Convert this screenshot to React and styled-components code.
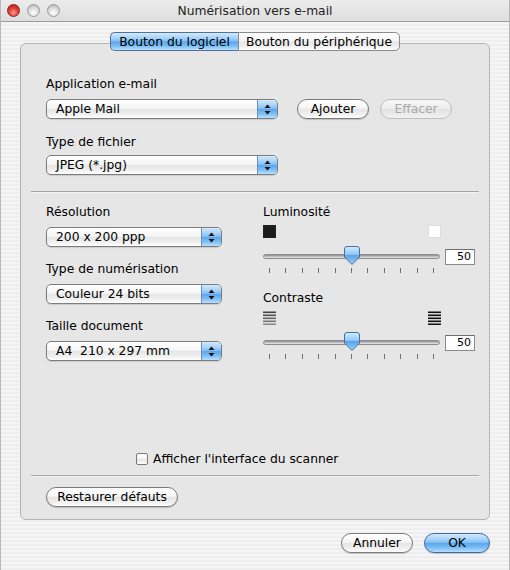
import React from 'react';
import styled, { createGlobalStyle, css } from 'styled-components';

const GlobalStyle = createGlobalStyle`
  html, body {
    margin: 0;
    padding: 0;
    background: #ececec;
  }
  body {
    font-family: 'DejaVu Sans', 'Liberation Sans', sans-serif;
    font-size: 12.3px;
    color: #000;
  }
`;

const blueGel = css`
  background: linear-gradient(
    180deg,
    #d2e9fd 0%,
    #a6d2f8 30%,
    #7ebcf3 49%,
    #5aa5ec 51%,
    #7fc0f5 78%,
    #b9e0ff 100%
  );
`;

const whiteGel = css`
  background: linear-gradient(
    180deg,
    #ffffff 0%,
    #f6f6f6 45%,
    #e6e6e6 52%,
    #f0f0f0 80%,
    #ffffff 100%
  );
`;

const Window = styled.div`
  width: 510px;
  height: 570px;
  box-sizing: border-box;
  display: flex;
  flex-direction: column;
  background: repeating-linear-gradient(
    180deg,
    #eeeeee 0px,
    #eeeeee 2px,
    #f5f5f5 2px,
    #f5f5f5 4px
  );
  border-left: 1px solid #b8b8b8;
  border-right: 1px solid #b8b8b8;
  overflow: hidden;
`;

const TitleBar = styled.div`
  height: 21px;
  flex-shrink: 0;
  display: flex;
  align-items: center;
  position: relative;
  background: linear-gradient(180deg, #ececec 0%, #dedede 100%);
  border-bottom: 1px solid #9a9a9a;
`;

const Lights = styled.div`
  display: flex;
  gap: 7px;
  padding-left: 6px;
`;

const Light = styled.span`
  width: 13px;
  height: 13px;
  border-radius: 50%;
  box-sizing: border-box;
  border: 1px solid ${(p) => (p.$red ? '#8a2020' : '#9a9a9a')};
  background: ${(p) =>
    p.$red
      ? 'radial-gradient(circle at 50% 70%, #ff9a8a 0%, #e0443a 45%, #a81a16 100%)'
      : 'radial-gradient(circle at 50% 70%, #ffffff 0%, #dcdcdc 50%, #a9a9a9 100%)'};
`;

const Title = styled.div`
  position: absolute;
  left: 0;
  right: 0;
  text-align: center;
  font-size: 12.3px;
  color: #222;
  pointer-events: none;
`;

const Body = styled.div`
  flex: 1;
  display: flex;
  flex-direction: column;
  padding: 10px 19px 0 19px;
`;

const TabRow = styled.div`
  display: flex;
  justify-content: center;
  margin-bottom: -8px;
  position: relative;
  z-index: 1;
`;

const Tab = styled.div`
  height: 19px;
  box-sizing: border-box;
  display: flex;
  align-items: center;
  justify-content: center;
  width: ${(p) => p.$w}px;
  border: 1px solid ${(p) => (p.$active ? '#50719c' : '#8a8a8a')};
  ${(p) => (p.$active ? blueGel : whiteGel)};
  ${(p) =>
    p.$first
      ? 'border-radius: 5px 0 0 5px; border-right: none;'
      : 'border-radius: 0 5px 5px 0;'}
`;

const Panel = styled.div`
  height: 477px;
  box-sizing: border-box;
  border: 1px solid #b4b4b4;
  border-radius: 6px;
  background: #e6e6e6;
  display: flex;
  flex-direction: column;
  padding: 22px 10px 0 10px;
`;

const Section = styled.div`
  padding: 0 0 0 15px;
`;

const Label = styled.div`
  line-height: 16px;
  margin-bottom: ${(p) => p.$mb ?? 7}px;
  margin-top: ${(p) => p.$mt ?? 0}px;
`;

const Row = styled.div`
  display: flex;
  align-items: center;
  margin-top: ${(p) => p.$mt ?? 0}px;
  margin-bottom: ${(p) => p.$mb ?? 0}px;
`;

const PopupBox = styled.div`
  width: ${(p) => p.$w}px;
  height: 20px;
  box-sizing: border-box;
  border: 1px solid #7d7d7d;
  border-radius: 5px;
  display: flex;
  overflow: hidden;
  ${whiteGel};
  box-shadow: 0 1px 1px rgba(0, 0, 0, 0.12);
`;

const PopupText = styled.div`
  flex: 1;
  padding-left: 9px;
  line-height: 18px;
  font-size: 12.3px;
`;

const PopupArrows = styled.div`
  width: 19px;
  border-left: 1px solid #6a8fbf;
  ${blueGel};
  display: flex;
  align-items: center;
  justify-content: center;
`;

const Popup = ({ w, children }) => (
  <PopupBox $w={w}>
    <PopupText>{children}</PopupText>
    <PopupArrows>
      <svg width="7" height="11" viewBox="0 0 7 11">
        <path d="M3.5 0.5 L6.5 4 L0.5 4 Z" fill="#111" />
        <path d="M3.5 10.5 L6.5 7 L0.5 7 Z" fill="#111" />
      </svg>
    </PopupArrows>
  </PopupBox>
);

const Button = styled.div`
  height: 20px;
  width: ${(p) => p.$w}px;
  box-sizing: border-box;
  border-radius: 10px;
  border: 1px solid ${(p) => (p.$disabled ? '#bdbdbd' : p.$primary ? '#3f6aa6' : '#7a7a7a')};
  display: flex;
  align-items: center;
  justify-content: center;
  color: ${(p) => (p.$disabled ? '#a9a9a9' : '#000')};
  ${(p) => (p.$primary ? blueGel : whiteGel)};
  ${(p) => p.$disabled && 'background: linear-gradient(180deg, #f7f7f7, #ececec 50%, #e2e2e2 51%, #f2f2f2);'}
  box-shadow: ${(p) => (p.$disabled ? 'none' : '0 1px 1px rgba(0,0,0,0.18)')};
  margin-left: ${(p) => p.$ml ?? 0}px;
`;

const Separator = styled.div`
  height: 1px;
  background: #a6a6a6;
  border-bottom: 1px solid #f4f4f4;
  margin-top: ${(p) => p.$mt}px;
`;

const Columns = styled.div`
  display: flex;
  padding-left: 15px;
  margin-top: 11px;
`;

const LeftCol = styled.div`
  width: 217px;
`;

const RightCol = styled.div`
  width: 214px;
`;

const Field = styled.div`
  margin-bottom: ${(p) => p.$mb ?? 14}px;
`;

const IconRow = styled.div`
  width: 178px;
  display: flex;
  justify-content: space-between;
  height: 14px;
  margin-bottom: 9px;
`;

const Swatch = styled.div`
  width: 13px;
  height: 13px;
  background: ${(p) => p.$c};
  border: ${(p) => (p.$c === '#fff' ? '1px solid #ddd' : '1px solid #222')};
  box-sizing: border-box;
`;

const SliderRow = styled.div`
  display: flex;
  align-items: center;
  height: 17px;
`;

const Track = styled.div`
  width: 177px;
  height: 17px;
  position: relative;
  display: flex;
  align-items: center;
`;

const TrackBar = styled.div`
  width: 100%;
  height: 5px;
  border-radius: 3px;
  background: linear-gradient(180deg, #8a8a8a, #c8c8c8 60%, #e8e8e8);
  border: 1px solid #8c8c8c;
  box-sizing: border-box;
`;

const Thumb = styled.svg`
  position: absolute;
  left: 81px;
  top: -2px;
`;

const ValueBox = styled.div`
  width: 30px;
  height: 16px;
  box-sizing: border-box;
  margin-left: 5px;
  border: 1px solid #8a8a8a;
  border-top-color: #6f6f6f;
  background: #fff;
  text-align: right;
  padding-right: 3px;
  line-height: 14px;
  font-size: 11px;
`;

const Ticks = styled.div`
  width: 177px;
  display: flex;
  justify-content: space-between;
  padding: 0 6px;
  box-sizing: border-box;
  margin-top: 3px;
  height: 5px;
`;

const Tick = styled.span`
  width: 1px;
  height: 5px;
  background: #6e6e6e;
`;

const Spacer = styled.div`
  flex: 1;
`;

const CheckRow = styled.label`
  display: flex;
  align-items: center;
  gap: 5px;
  padding-left: 105px;
`;

const CheckBox = styled.span`
  width: 12px;
  height: 12px;
  box-sizing: border-box;
  border: 1px solid #7a7a7a;
  border-radius: 2px;
  ${whiteGel};
`;

const Footer = styled.div`
  display: flex;
  justify-content: flex-end;
  padding-top: 13px;
  height: 50px;
`;

const LinesIcon = ({ dark }) => (
  <svg width="13" height="14" viewBox="0 0 13 14">
    {[0, 1, 2, 3, 4].map((i) => (
      <rect
        key={i}
        x="0"
        y={i * 3 + 0.5}
        width="13"
        height="1.6"
        fill={dark ? '#111' : ['#444', '#555', '#666', '#777', '#888'][i]}
      />
    ))}
  </svg>
);

const Slider = () => (
  <div>
    <SliderRow>
      <Track>
        <TrackBar />
        <Thumb width="16" height="19" viewBox="0 0 16 19">
          <defs>
            <linearGradient id="thumbg" x1="0" y1="0" x2="0" y2="1">
              <stop offset="0" stopColor="#d6ecff" />
              <stop offset="0.45" stopColor="#8cc6f6" />
              <stop offset="0.5" stopColor="#5aa3ea" />
              <stop offset="1" stopColor="#9fd2fb" />
            </linearGradient>
          </defs>
          <path
            d="M3 0.5 H13 Q15.5 0.5 15.5 3 V11 L8 18.5 L0.5 11 V3 Q0.5 0.5 3 0.5 Z"
            fill="url(#thumbg)"
            stroke="#4b6e9c"
          />
        </Thumb>
      </Track>
      <ValueBox>50</ValueBox>
    </SliderRow>
    <Ticks>
      {Array.from({ length: 11 }).map((_, i) => (
        <Tick key={i} />
      ))}
    </Ticks>
  </div>
);

export default function App() {
  return (
    <>
      <GlobalStyle />
      <Window>
        <TitleBar>
          <Lights>
            <Light $red />
            <Light />
            <Light />
          </Lights>
          <Title>Numérisation vers e-mail</Title>
        </TitleBar>
        <Body>
          <TabRow>
            <Tab $w={128} $active $first>
              Bouton du logiciel
            </Tab>
            <Tab $w={162}>Bouton du périphérique</Tab>
          </TabRow>
          <Panel>
            <Section>
              <Label $mt={10}>Application e-mail</Label>
              <Row>
                <Popup w={232}>Apple Mail</Popup>
                <Button $w={72} $ml={19}>
                  Ajouter
                </Button>
                <Button $w={72} $ml={11} $disabled>
                  Effacer
                </Button>
              </Row>
              <Label $mt={15} $mb={5}>
                Type de fichier
              </Label>
              <Popup w={232}>JPEG (*.jpg)</Popup>
            </Section>
            <Separator $mt={16} />
            <Columns>
              <LeftCol>
                <Field>
                  <Label>Résolution</Label>
                  <Popup w={176}>200 x 200 ppp</Popup>
                </Field>
                <Field>
                  <Label>Type de numérisation</Label>
                  <Popup w={176}>Couleur 24 bits</Popup>
                </Field>
                <Field>
                  <Label>Taille document</Label>
                  <Popup w={176}>A4&nbsp;&nbsp;210 x 297 mm</Popup>
                </Field>
              </LeftCol>
              <RightCol>
                <Field $mb={17}>
                  <Label $mb={5}>Luminosité</Label>
                  <IconRow>
                    <Swatch $c="#1c1c1c" />
                    <Swatch $c="#fff" />
                  </IconRow>
                  <Slider />
                </Field>
                <Field>
                  <Label $mb={5}>Contraste</Label>
                  <IconRow>
                    <LinesIcon />
                    <LinesIcon dark />
                  </IconRow>
                  <Slider />
                </Field>
              </RightCol>
            </Columns>
            <Spacer />
            <CheckRow>
              <CheckBox />
              Afficher l'interface du scanner
            </CheckRow>
            <Separator $mt={9} />
            <Section>
              <Row $mt={10} $mb={12}>
                <Button $w={132}>Restaurer défauts</Button>
              </Row>
            </Section>
          </Panel>
          <Footer>
            <Button $w={72}>Annuler</Button>
            <Button $w={66} $ml={11} $primary>
              OK
            </Button>
          </Footer>
        </Body>
      </Window>
    </>
  );
}
